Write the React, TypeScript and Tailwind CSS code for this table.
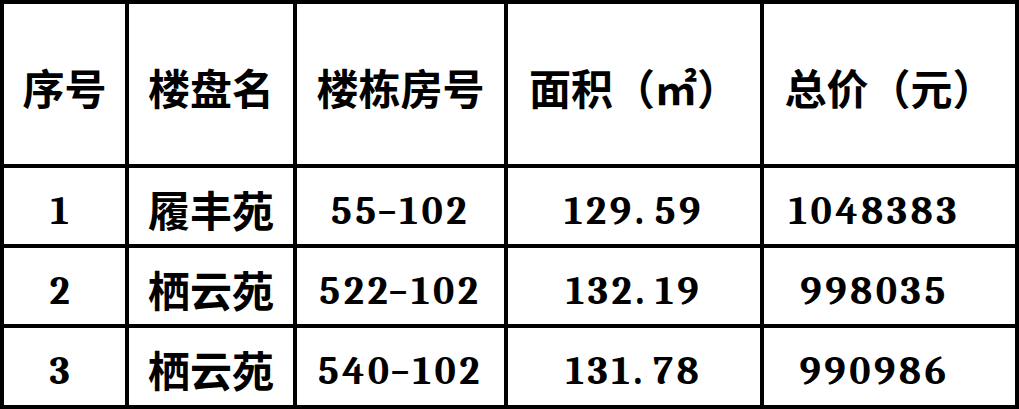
import React from 'react';

const headers = ['序号', '楼盘名', '楼栋房号', '面积（㎡）', '总价（元）'];

const rows = [
  { no: '1', name: '履丰苑', unit: '55-102', area: '129.59', price: '1048383' },
  { no: '2', name: '栖云苑', unit: '522-102', area: '132.19', price: '998035' },
  { no: '3', name: '栖云苑', unit: '540-102', area: '131.78', price: '990986' },
];

// SimSun-style half-width look: the hyphen and the period take a full digit cell
const Numeric: React.FC<{ value: string }> = ({ value }) => {
  const parts = value.split(/([-.])/).filter(Boolean);
  return (
    <>
      {parts.map((p, i) =>
        p === '-' ? (
          <span key={i} className="inline-block w-[20px] text-center">
            <span className="inline-block scale-x-[1.7] scale-y-[0.8]">-</span>
          </span>
        ) : p === '.' ? (
          <span key={i} className="inline-block w-[20px] text-left">.</span>
        ) : (
          <span key={i}>{p}</span>
        ),
      )}
    </>
  );
};

const HeadCell: React.FC<{ label: string }> = ({ label }) => (
  <div className="bg-white flex items-center justify-center pt-[5px] text-[42px] leading-none font-bold text-black whitespace-nowrap font-['Noto_Sans_CJK_SC']">
    {label}
  </div>
);

const NumCell: React.FC<{ value: string; extra?: string }> = ({ value, extra = '' }) => (
  <div
    className={
      'bg-white flex items-center justify-center pt-[9px] text-[40px] leading-none font-bold tracking-[3.5px] text-black whitespace-nowrap font-serif ' +
      extra
    }
  >
    <Numeric value={value} />
  </div>
);

const TextCell: React.FC<{ value: string }> = ({ value }) => (
  <div className="bg-white flex items-center justify-center pt-[5px] text-[42px] leading-none font-bold text-black whitespace-nowrap font-['Noto_Sans_CJK_SC']">
    {value}
  </div>
);

export default function App() {
  return (
    <div className="w-[1019px] h-[409px] bg-white overflow-hidden">
      <div className="grid grid-cols-[121px_164px_207px_252px_251px] grid-rows-[160px_76px_76px_77px] gap-[4px] p-[4px] bg-black w-[1019px] h-[409px]">
        {headers.map((h) => (
          <HeadCell key={h} label={h} />
        ))}
        {rows.map((r) => (
          <React.Fragment key={r.no}>
            <NumCell value={r.no} extra="pr-[6px]" />
            <TextCell value={r.name} />
            <NumCell value={r.unit} />
            <NumCell value={r.area} />
            <NumCell value={r.price} extra="pr-[30px]" />
          </React.Fragment>
        ))}
      </div>
    </div>
  );
}
